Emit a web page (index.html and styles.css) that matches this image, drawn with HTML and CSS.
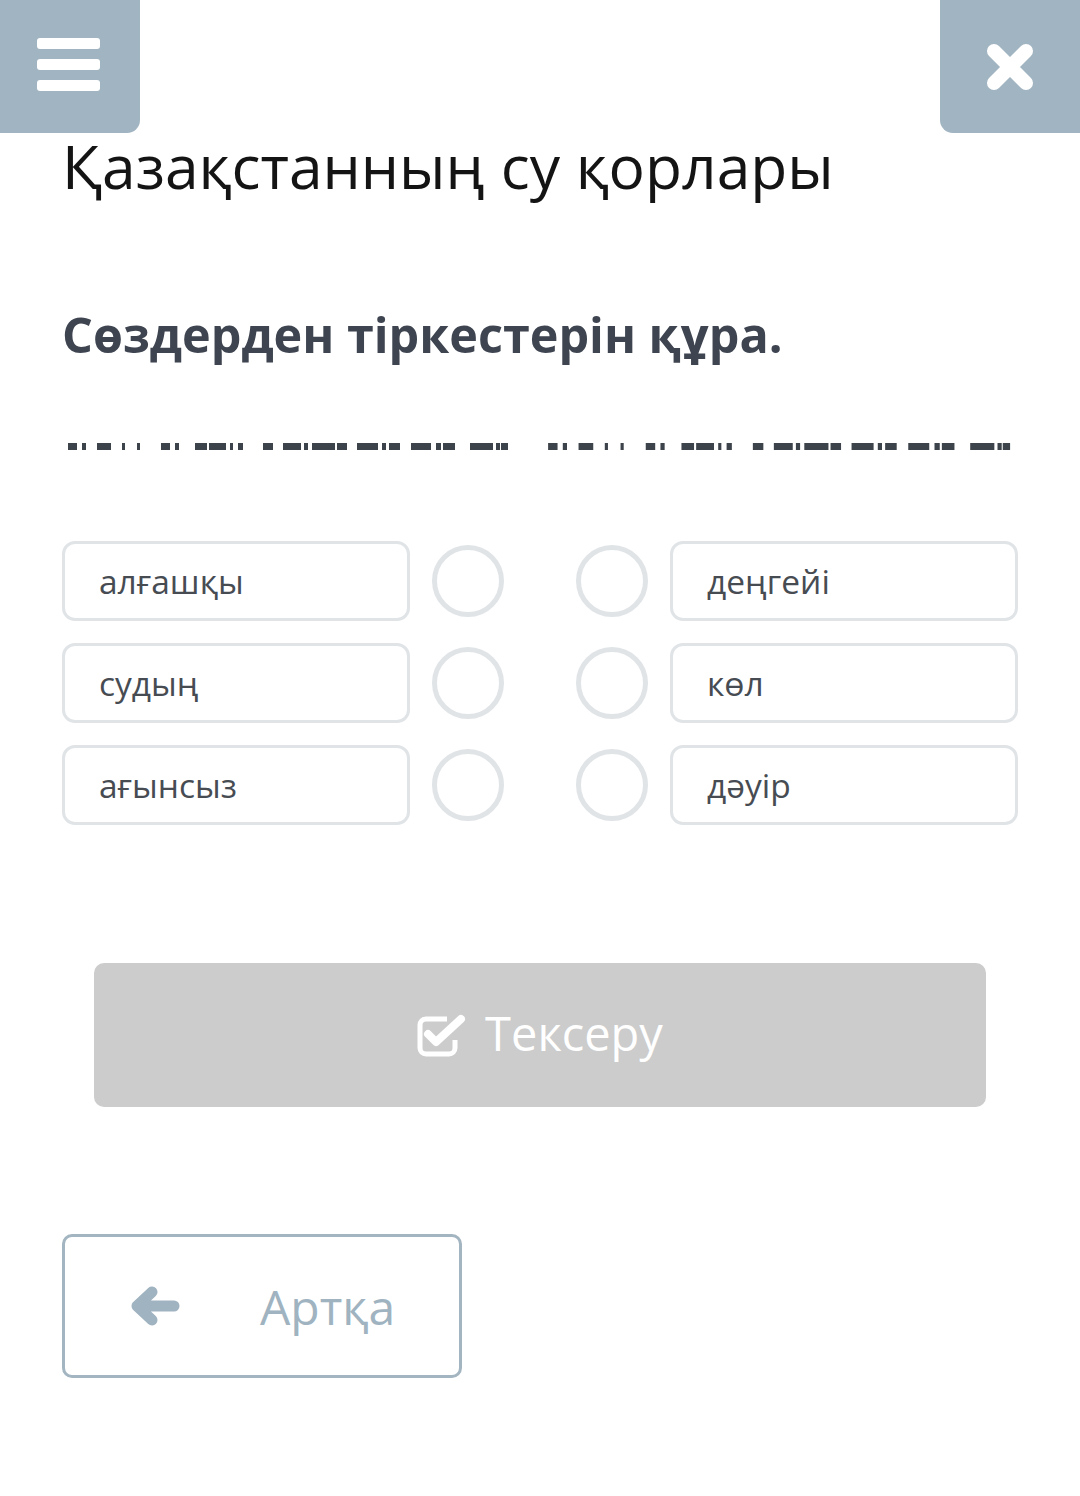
FILE: index.html
```html
<!DOCTYPE html>
<html>
    <head>
        <title>Қазақстанның су қорлары</title>
        <meta charset="utf-8">
        <link rel="stylesheet" href="styles.css">
    </head>
    <body>
        <div class="topbar">
            <div class="menu-btn">
                <span></span><span></span><span></span>
            </div>
            <div class="close-btn">
                <svg width="50" height="50" viewBox="0 0 50 50">
                    <path d="M9 9 L41 41 M41 9 L9 41" stroke="#fff" stroke-width="14" stroke-linecap="round"/>
                </svg>
            </div>
        </div>

        <div class="content">
            <h1 class="title">Қазақстанның су қорлары</h1>
            <h2 class="task">Сөздерден тіркестерін құра.</h2>

            <!-- hidden sentence row -->
            <svg class="hidden-row" width="950" height="7" viewBox="0 0 950 7">
                <defs>
                    <g id="blk" fill="#3d434b">
                        <rect x="2" width="9" height="7"/><rect x="16" width="4" height="7"/>
                        <rect x="31" width="14" height="7"/><rect x="56" width="3" height="7"/>
                        <rect x="71" width="3" height="7"/><rect x="95" width="9" height="7"/>
                        <rect x="109" width="4" height="7"/><rect x="129" width="12" height="7"/>
                        <rect x="143" width="17" height="7"/><rect x="164" width="3" height="7"/>
                        <rect x="172" width="5" height="7"/><rect x="197" width="10" height="7"/>
                        <rect x="217" width="18" height="7"/><rect x="238" width="4" height="7"/>
                        <rect x="246" width="23" height="7"/><rect x="271" width="10" height="7"/>
                        <rect x="291" width="21" height="7"/><rect x="316" width="4" height="7"/>
                        <rect x="323" width="11" height="7"/><rect x="345" width="20" height="7"/>
                        <rect x="370" width="5" height="7"/><rect x="377" width="12" height="7"/>
                        <rect x="404" width="23" height="7"/><rect x="430" width="4" height="7"/>
                        <rect x="435" width="7" height="7"/>
                    </g>
                </defs>
                <use href="#blk"/>
                <use href="#blk" transform="translate(480 0) scale(1.05 1)"/>
            </svg>

            <div class="match">
                <div class="word">алғашқы</div>
                <div class="dot left"></div>
                <div class="dot right"></div>
                <div class="word">деңгейі</div>

                <div class="word">судың</div>
                <div class="dot left"></div>
                <div class="dot right"></div>
                <div class="word">көл</div>

                <div class="word">ағынсыз</div>
                <div class="dot left"></div>
                <div class="dot right"></div>
                <div class="word">дәуір</div>
            </div>

            <div class="check-btn">
                <svg width="50" height="44" viewBox="0 0 50 44">
                    <path d="M30 6 H9 a6 6 0 0 0 -6 6 V35 a6 6 0 0 0 6 6 H32 a6 6 0 0 0 6 -6 V27" fill="none" stroke="#fff" stroke-width="5"/>
                    <path d="M11 21 L19 29 L44 6" fill="none" stroke="#fff" stroke-width="8" stroke-linecap="round" stroke-linejoin="round"/>
                </svg>
                <span>Тексеру</span>
            </div>

            <div class="back-btn">
                <svg width="50" height="40" viewBox="0 0 50 40">
                    <path d="M22 6 L7 20 L22 34 M7 20 H44" fill="none" stroke="#a0b3c0" stroke-width="11" stroke-linecap="round" stroke-linejoin="round"/>
                </svg>
                <span>Артқа</span>
            </div>
        </div>
    </body>
</html>
```

FILE: styles.css
```css
html, body {
    margin: 0;
    padding: 0;
    background: #fff;
    font-family: "Open Sans", "Noto Sans", sans-serif;
}

.topbar {
    display: flex;
    justify-content: space-between;
    height: 133px;
}

.menu-btn {
    width: 140px;
    height: 133px;
    background: #a1b4c1;
    border-bottom-right-radius: 13px;
    display: flex;
    flex-direction: column;
    gap: 10px;
    padding: 38px 0 0 37px;
    box-sizing: border-box;
}
.menu-btn span {
    display: block;
    width: 63px;
    height: 11px;
    border-radius: 3px;
    background: #fff;
}

.close-btn {
    width: 140px;
    height: 133px;
    background: #a1b4c1;
    border-bottom-left-radius: 13px;
    display: flex;
    align-items: center;
    justify-content: center;
}

.content {
    padding-left: 62px;
}

.title {
    margin: 0;
    font-size: 60.5px;
    line-height: 66px;
    font-weight: 400;
    color: #141414;
}

.task {
    margin: 105px 0 0;
    font-size: 48.5px;
    line-height: 60px;
    font-weight: 700;
    color: #3e4550;
}

.hidden-row {
    display: block;
    margin: 79px 0 0 4px;
}

.match {
    margin-top: 91px;
    width: 956px;
    display: grid;
    grid-template-columns: 348px 1fr 1fr 348px;
    grid-auto-rows: 80px;
    column-gap: 22px;
    row-gap: 22px;
}

.word {
    border: 3px solid #e0e4e7;
    border-radius: 13px;
    display: flex;
    align-items: center;
    padding-left: 34px;
    font-size: 33.5px;
    color: #474c53;
}

.dot {
    width: 72px;
    height: 72px;
    box-sizing: border-box;
    border: 5px solid #e0e4e7;
    border-radius: 50%;
    align-self: center;
}
.dot.left {
    justify-self: start;
}
.dot.right {
    justify-self: end;
}

.check-btn {
    margin: 138px 0 0 32px;
    width: 892px;
    height: 144px;
    border-radius: 10px;
    background: #cccccc;
    display: flex;
    align-items: center;
    justify-content: center;
    gap: 18px;
    color: #fff;
    font-size: 47px;
}
.check-btn span {
    margin-top: -4px;
}

.back-btn {
    margin-top: 127px;
    width: 400px;
    height: 144px;
    box-sizing: border-box;
    border: 3px solid #a3b5c1;
    border-radius: 10px;
    display: flex;
    align-items: center;
    padding-left: 65px;
    gap: 80px;
    color: #a0b3c0;
    font-size: 48px;
}
```
